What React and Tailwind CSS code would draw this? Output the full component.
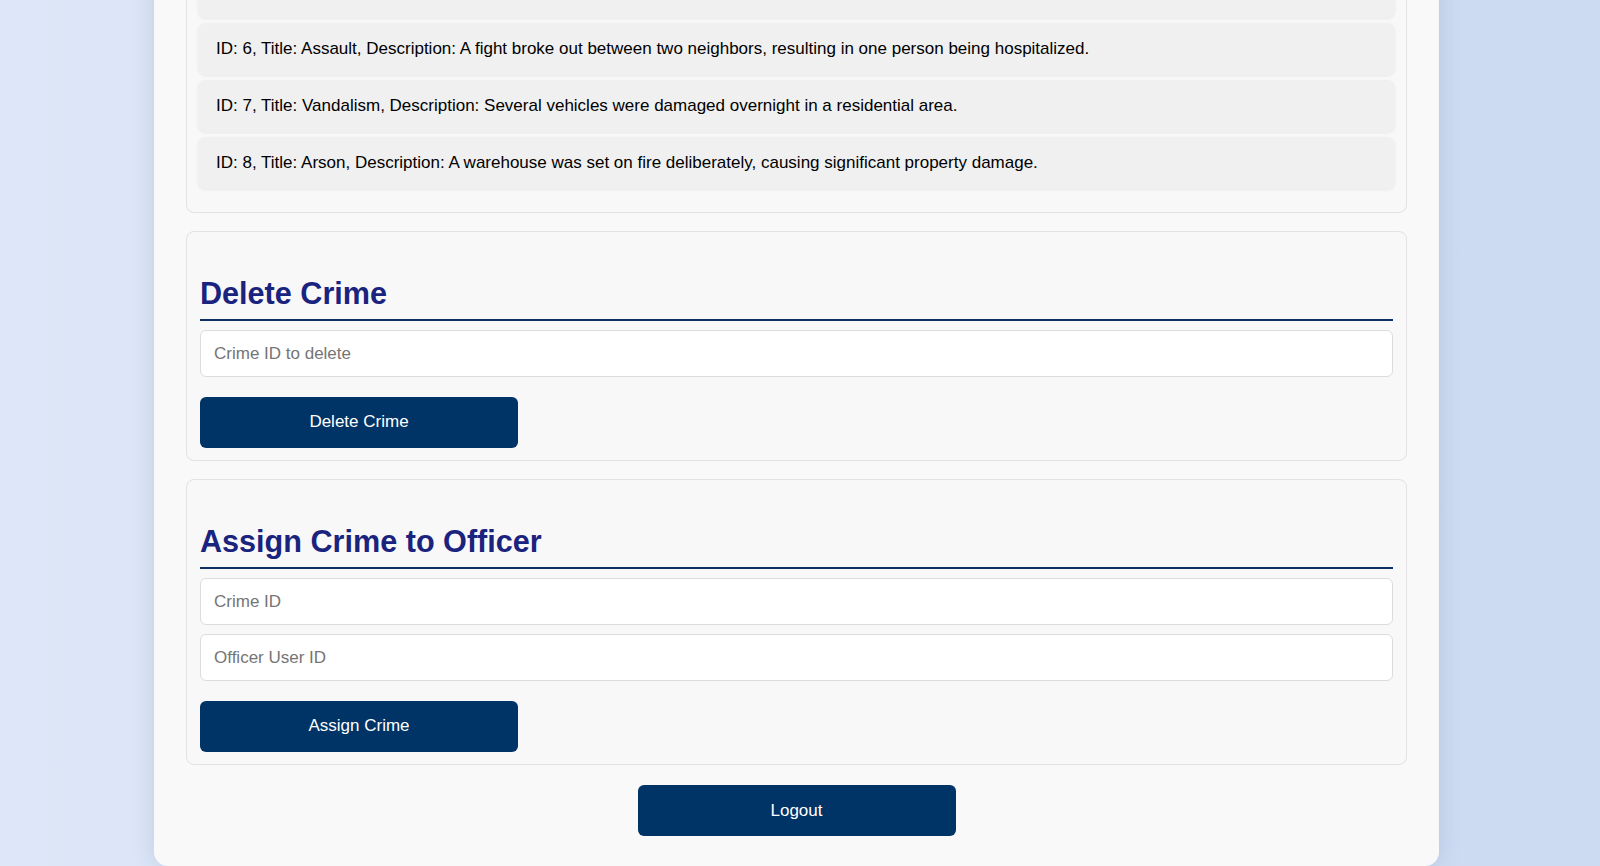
import { useState } from 'react'

const CRIMES = [
  { id: 1, title: 'Robbery', description: 'A convenience store was robbed at gunpoint late at night.' },
  { id: 2, title: 'Burglary', description: 'A house was broken into while the owners were on vacation.' },
  { id: 3, title: 'Theft', description: 'A bicycle was stolen from outside the public library.' },
  { id: 4, title: 'Fraud', description: 'Several residents reported unauthorized charges on their credit cards.' },
  { id: 5, title: 'Kidnapping', description: 'A young child was abducted from a shopping mall, and the suspect was seen fleeing in a grey van.' },
  { id: 6, title: 'Assault', description: 'A fight broke out between two neighbors, resulting in one person being hospitalized.' },
  { id: 7, title: 'Vandalism', description: 'Several vehicles were damaged overnight in a residential area.' },
  { id: 8, title: 'Arson', description: 'A warehouse was set on fire deliberately, causing significant property damage.' },
]

const FONT = "font-['Liberation_Sans',Helvetica,Arial,sans-serif]"

function Field({ placeholder, value, onChange }) {
  return (
    <input
      type="text"
      placeholder={placeholder}
      value={value}
      onChange={(e) => onChange(e.target.value)}
      className="w-full h-[47px] px-[13px] bg-white border border-[#dcdcdc] rounded-md text-[17px] text-black placeholder:text-[#757575] focus:outline-none"
    />
  )
}

function Heading({ children }) {
  return (
    <h2 className="mt-[31.5px] mb-[9px] pb-[8.5px] border-b-2 border-[#0b2f63] text-[30.6px] leading-[35px] font-bold text-[#1a237e]">
      {children}
    </h2>
  )
}

function Button({ children, className = '' }) {
  return (
    <button className={`w-[318px] h-[51px] bg-[#003366] text-white text-[17px] rounded-md ${className}`}>
      {children}
    </button>
  )
}

export default function App() {
  const [deleteId, setDeleteId] = useState('')
  const [crimeId, setCrimeId] = useState('')
  const [officerId, setOfficerId] = useState('')

  return (
    <div className={`h-[866px] overflow-hidden flex flex-col justify-end pr-[7px] bg-linear-to-r from-[#dde7f8] to-[#ccdaf2] ${FONT}`}>
      <div className="w-[1285px] mx-auto shrink-0 bg-[#f9f9f9] rounded-[14px] px-8 pt-8 pb-[30px] shadow-[0_0_24px_rgba(40,60,100,0.14)]">
        <h1 className="text-center text-[36px] font-bold text-[#1a237e] mb-6">Admin Dashboard</h1>

        {/* Crime list */}
        <div className="bg-[#f8f8f8] border border-[#e2e2e2] rounded-lg px-[11px] pt-3 pb-[23px]">
          <h2 className="mt-[30px] mb-[9px] mx-[2px] pb-[10px] border-b-2 border-[#0b2f63] text-[30.6px] leading-[35px] font-bold text-[#1a237e]">
            All Crimes
          </h2>
          <ul className="flex flex-col gap-[5px]">
            {CRIMES.map(c => (
              <li
                key={c.id}
                className="h-[52px] flex items-center pl-[18px] pr-4 pt-[1px] bg-[#f0f0f0] rounded-lg shadow-[0_1px_3px_rgba(0,0,0,0.07)] text-[17px] text-black whitespace-nowrap overflow-hidden"
              >
                ID: {c.id}, Title: {c.title}, Description: {c.description}
              </li>
            ))}
          </ul>
        </div>

        {/* Delete crime */}
        <div className="mt-[18.5px] bg-[#f8f8f8] border border-[#e2e2e2] rounded-lg px-[13px] py-3">
          <Heading>Delete Crime</Heading>
          <Field placeholder="Crime ID to delete" value={deleteId} onChange={setDeleteId} />
          <Button className="mt-[19.5px]">Delete Crime</Button>
        </div>

        {/* Assign crime */}
        <div className="mt-[18.5px] bg-[#f8f8f8] border border-[#e2e2e2] rounded-lg px-[13px] py-3">
          <Heading>Assign Crime to Officer</Heading>
          <div className="flex flex-col gap-[9px]">
            <Field placeholder="Crime ID" value={crimeId} onChange={setCrimeId} />
            <Field placeholder="Officer User ID" value={officerId} onChange={setOfficerId} />
          </div>
          <Button className="mt-[19.5px]">Assign Crime</Button>
        </div>

        <div className="mt-[20.5px] flex justify-center">
          <Button>Logout</Button>
        </div>
      </div>
    </div>
  )
}
